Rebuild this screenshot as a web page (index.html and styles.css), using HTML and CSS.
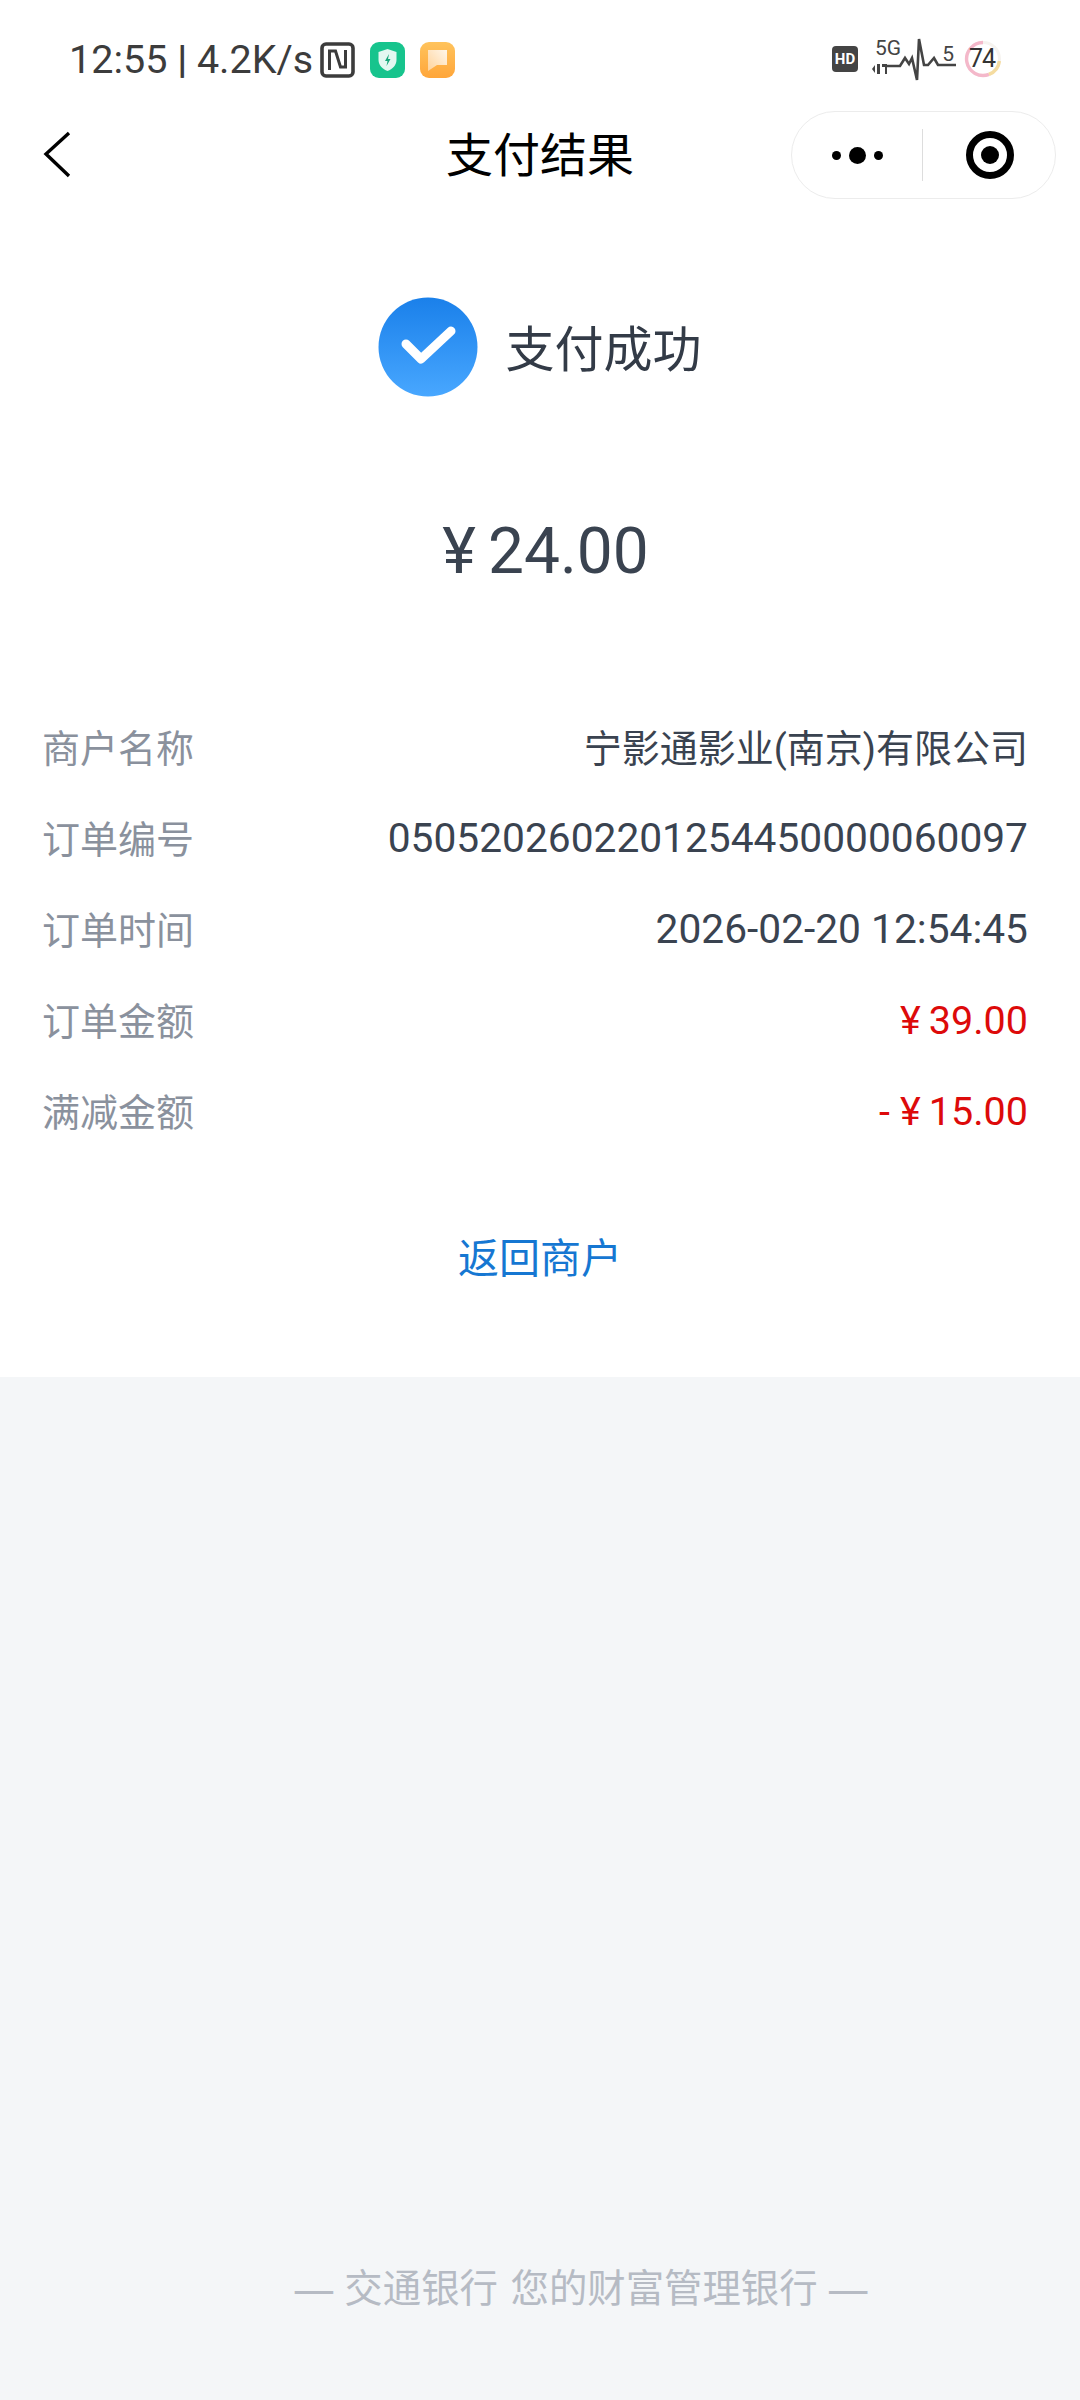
FILE: index.html
```html
<!DOCTYPE html>
<html lang="zh-CN">
<head>
    <meta charset="UTF-8">
    <title>支付结果</title>
    <link rel="stylesheet" href="styles.css">
</head>
<body>
    <div class="result-panel">
        <div class="status-bar">
            <div class="status-left">
                <span class="status-text">12:55 <b class="status-sep">|</b> 4.2K/s</span>
                <svg class="icon-nfc" width="35" height="36" viewBox="0 0 35 36"><rect x="2" y="2" width="31" height="32" rx="4" fill="none" stroke="#3c3c3c" stroke-width="3.600"/><path d="M9.500 28V9h6l5 16h5V8" fill="none" stroke="#3c3c3c" stroke-width="3"/></svg>
                <svg class="icon-app" width="35" height="36" viewBox="0 0 35 36"><rect width="35" height="36" rx="9" fill="#17c48d"/><path d="M17.500 7l9 3v8c0 5-4 9-9 11-5-2-9-6-9-11v-8z" fill="#e4f8f1"/><path d="M19 12l-4 7h2.500l-1 5 4-7h-2.500z" fill="#17a67a"/></svg>
                <svg class="icon-app" width="35" height="36" viewBox="0 0 35 36"><defs><linearGradient id="orange" x1="0" y1="0" x2="0" y2="1"><stop offset="0" stop-color="#ffc35c"/><stop offset="1" stop-color="#ffa63a"/></linearGradient><linearGradient id="note" x1="1" y1="0" x2="0" y2="1"><stop offset="0" stop-color="#fff6ea"/><stop offset="1" stop-color="#ffd39a"/></linearGradient></defs><rect width="35" height="36" rx="9" fill="url(#orange)"/><path d="M8 8h19v15H17l-9 6z" fill="url(#note)"/></svg>
            </div>
            <div class="status-right">
                <span class="hd-badge">HD</span>
                <div class="signal">
                    <span class="signal-5g">5G</span>
                    <span class="signal-5">5</span>
                    <svg width="84" height="44" viewBox="0 0 84 44"><path d="M0 32l3-4v8zM5 27h3v10H5zM10 27h5v10h-2v-7h-3z" fill="#444"/><path d="M14 29H28L33 21L37 27L40 21L45 43L47 2L52 28H56L62 21L66 28H84" fill="none" stroke="#444" stroke-width="2.600"/></svg>
                </div>
                <div class="battery">
                    <svg width="38" height="38" viewBox="0 0 38 38"><circle cx="19" cy="19" r="16.500" fill="none" stroke="#f6f3ef" stroke-width="3"/><path d="M19 2.500A16.500 16.500 0 1 0 25 34.400" fill="none" stroke="#f4b8ca" stroke-width="3.400"/><path d="M25 34.400A16.500 16.500 0 0 0 35.400 21" fill="none" stroke="#f5dca0" stroke-width="3.400"/></svg>
                    <span class="battery-num">74</span>
                </div>
            </div>
        </div>

        <div class="nav-bar">
            <svg class="nav-back" width="30" height="50" viewBox="0 0 30 50"><path d="M27 4L4 25l23 22" fill="none" stroke="#000" stroke-width="3.400"/></svg>
            <h1 class="nav-title">支付结果</h1>
            <div class="capsule">
                <div class="capsule-more">
                    <i class="dot"></i><i class="dot dot-big"></i><i class="dot"></i>
                </div>
                <div class="capsule-line"></div>
                <div class="capsule-close"><i class="close-ring"></i></div>
            </div>
        </div>

        <div class="pay-status">
            <svg width="100" height="100" viewBox="0 0 100 100"><defs><linearGradient id="blue" x1="0" y1="0" x2="0" y2="1"><stop offset="0" stop-color="#1a80ea"/><stop offset="1" stop-color="#48a7ff"/></linearGradient></defs><circle cx="50" cy="50" r="49.500" fill="url(#blue)"/><path d="M28 47l15 15 30-28" fill="none" stroke="#fff" stroke-width="9" stroke-linecap="round" stroke-linejoin="round"/></svg>
            <span class="pay-status-text">支付成功</span>
        </div>

        <div class="pay-amount"><span class="yen">¥</span>24.00</div>

        <div class="detail-list">
            <div class="detail-row"><span class="detail-label">商户名称</span><span class="detail-value">宁影通影业(南京)有限公司</span></div>
            <div class="detail-row"><span class="detail-label">订单编号</span><span class="detail-value detail-num">0505202602201254450000060097</span></div>
            <div class="detail-row"><span class="detail-label">订单时间</span><span class="detail-value detail-num">2026-02-20 12:54:45</span></div>
            <div class="detail-row"><span class="detail-label">订单金额</span><span class="detail-value detail-num red"><span class="yen-small">¥</span>39.00</span></div>
            <div class="detail-row"><span class="detail-label">满减金额</span><span class="detail-value detail-num red"><span class="minus">-</span><span class="yen-small">¥</span>15.00</span></div>
        </div>

        <div class="back-link">返回商户</div>
    </div>

    <div class="footer-area">
        <div class="slogan">
            <span class="slogan-dash">—</span>
            <span>交通银行 您的财富管理银行</span>
            <span class="slogan-dash">—</span>
        </div>
    </div>
</body>
</html>
```

FILE: styles.css
```css
* {
    box-sizing: border-box;
}

body {
    margin: 0;
    height: 2400px;
    display: flex;
    flex-direction: column;
    background-color: #f4f6f8;
    font-family: Roboto, "Noto Sans CJK SC", sans-serif;
    overflow: hidden;
}

.result-panel {
    height: 1377px;
    background-color: #fff;
}

.status-bar {
    height: 110px;
    padding: 42px 78px 0 69px;
    display: flex;
    justify-content: space-between;
    align-items: flex-start;
}

.status-left {
    display: flex;
    align-items: center;
    height: 36px;
}

.status-text {
    width: 243px;
    margin-top: -2px;
    margin-right: 8px;
    font-size: 39.5px;
    color: #3c3c3c;
    white-space: nowrap;
}

.status-sep {
    font-weight: 700;
}

.icon-nfc {
    margin-right: 15px;
}

.icon-app {
    margin-right: 15px;
}

.status-right {
    display: flex;
    align-items: flex-start;
}

.hd-badge {
    width: 26px;
    height: 26px;
    margin-top: 4px;
    border-radius: 4px;
    background-color: #444;
    color: #fff;
    font-size: 15px;
    font-weight: 700;
    line-height: 26px;
    text-align: center;
}

.signal {
    position: relative;
    width: 84px;
    height: 44px;
    margin-left: 14px;
    margin-top: -5px;
}

.signal-5g {
    position: absolute;
    left: 3px;
    top: -1px;
    font-size: 21px;
    color: #444;
}

.signal-5 {
    position: absolute;
    right: 2px;
    top: 5px;
    font-size: 21px;
    color: #444;
}

.battery {
    position: relative;
    width: 38px;
    height: 38px;
    margin-left: 8px;
    margin-top: -2px;
}

.battery-num {
    position: absolute;
    left: 5px;
    top: 5px;
    font-size: 25px;
    line-height: 28px;
    letter-spacing: -1px;
    color: #333;
}

.nav-bar {
    position: relative;
    height: 90px;
    display: flex;
    align-items: center;
    justify-content: center;
}

.nav-back {
    position: absolute;
    left: 42px;
    top: 19px;
}

.nav-title {
    margin: 0 0 8px;
    font-size: 47px;
    font-weight: 400;
    color: #000;
}

.capsule {
    position: absolute;
    right: 24px;
    top: 1px;
    width: 265px;
    height: 88px;
    border: 1px solid #ececec;
    border-radius: 44px;
    display: flex;
    align-items: center;
}

.capsule-more {
    width: 130px;
    display: flex;
    justify-content: center;
    align-items: center;
    gap: 8px;
}

.dot {
    width: 9px;
    height: 9px;
    border-radius: 50%;
    background-color: #000;
}

.dot-big {
    width: 17px;
    height: 17px;
}

.capsule-line {
    width: 1px;
    height: 52px;
    background-color: #ddd;
}

.capsule-close {
    flex: 1;
    display: flex;
    justify-content: center;
    padding-left: 2px;
}

.close-ring {
    width: 48px;
    height: 48px;
    border: 7px solid #000;
    border-radius: 50%;
    display: flex;
    align-items: center;
    justify-content: center;
}

.close-ring::after {
    content: "";
    width: 18px;
    height: 18px;
    border-radius: 50%;
    background-color: #000;
}

.pay-status {
    margin-top: 97px;
    height: 100px;
    display: flex;
    justify-content: center;
    align-items: center;
    gap: 27px;
}

.pay-status-text {
    margin-bottom: 3px;
    font-size: 49px;
    color: #333b47;
}

.pay-amount {
    margin-top: 117px;
    height: 76px;
    padding-left: 11px;
    text-align: center;
    font-size: 64px;
    line-height: 76px;
    color: #3a4350;
}

.yen {
    margin-right: 12px;
}

.detail-list {
    margin-top: 110px;
    padding: 0 52px 0 42px;
}

.detail-row {
    height: 91px;
    display: flex;
    justify-content: space-between;
    align-items: center;
    font-size: 38px;
}

.detail-label {
    color: #8a919d;
}

.detail-value {
    color: #3a4350;
}

.detail-num {
    padding-top: 3px;
    font-size: 40.7px;
}

.yen-small {
    margin-right: 8px;
}

.minus {
    margin-right: 10px;
}

.detail-value.red {
    font-size: 39.5px;
    color: #dd0a0a;
}

.back-link {
    margin-top: 70px;
    text-align: center;
    font-size: 41px;
    color: #1677d2;
}

.footer-area {
    flex: 1;
    display: flex;
    align-items: flex-end;
    justify-content: center;
    padding-bottom: 87px;
    padding-left: 82px;
}

.slogan {
    display: flex;
    align-items: center;
    gap: 9px;
    font-family: "Noto Sans CJK SC", sans-serif;
    font-size: 38.4px;
    word-spacing: 4px;
    color: #b6bbc4;
    white-space: nowrap;
}

.slogan-dash {
    font-size: 48px;
    line-height: 1;
}
```
